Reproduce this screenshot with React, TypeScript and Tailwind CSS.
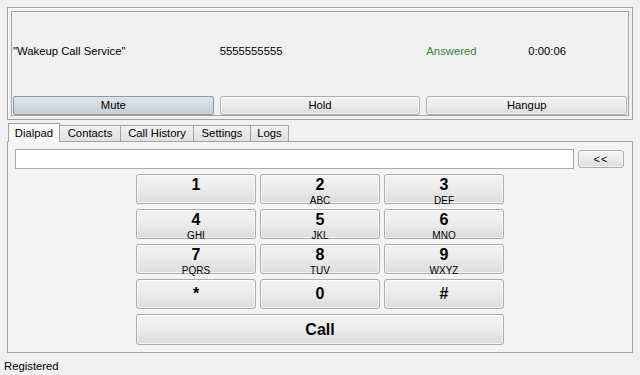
import React from 'react';

const keys = [
  { d: '1', l: '\u00a0' },
  { d: '2', l: 'ABC' },
  { d: '3', l: 'DEF' },
  { d: '4', l: 'GHI' },
  { d: '5', l: 'JKL' },
  { d: '6', l: 'MNO' },
  { d: '7', l: 'PQRS' },
  { d: '8', l: 'TUV' },
  { d: '9', l: 'WXYZ' },
];

const btn =
  'border border-[#acacac] rounded-[3px] bg-gradient-to-b from-[#f3f3f3] via-[#ebebeb] to-[#dcdcdc] shadow-[inset_0_0_0_1px_rgba(255,255,255,0.7)]';

const tabs = [
  { label: 'Dialpad', w: 'w-[52px]' },
  { label: 'Contacts', w: 'w-[62px]' },
  { label: 'Call History', w: 'w-[74px]' },
  { label: 'Settings', w: 'w-[58px]' },
  { label: 'Logs', w: 'w-[39px]' },
];

export default function App() {
  return (
    <div className="w-[640px] h-[375px] bg-[#f0f0f0] font-['Liberation_Sans',Arial,sans-serif] text-[11.3px] text-black flex flex-col overflow-hidden">
      {/* active call panel */}
      <div className="mx-[7px] mt-[7px] h-[113px] border border-[#a3a3a3] p-[3px] shadow-[inset_1px_1px_0_#fff]">
        <div className="h-full border border-[#a3a3a3] flex flex-col px-[1px]">
          <div className="h-[78px] grid grid-cols-3 gap-[6px] items-center">
            <span>"Wakeup Call Service"</span>
            <span>5555555555</span>
            <div className="flex">
              <span className="w-[102px] text-[#3b873b]">Answered</span>
              <span>0:00:06</span>
            </div>
          </div>
          <div className="h-[19px] grid grid-cols-3 gap-[6px] mt-[6px]">
            <button className="border border-[#8c9aa8] rounded-[2px] bg-gradient-to-b from-[#e0e5ea] to-[#c8cfd7] leading-none">
              Mute
            </button>
            <button className={`${btn} leading-none`}>Hold</button>
            <button className={`${btn} leading-none`}>Hangup</button>
          </div>
        </div>
      </div>

      {/* tabs */}
      <div className="mt-[3px] h-[18px] flex items-end pl-[8px] relative z-10">
        {tabs.map((t, i) =>
          i === 0 ? (
            <div
              key={t.label}
              className={`${t.w} h-[19px] -mb-px border border-b-0 border-[#a3a3a3] bg-[#f9f9f9] flex items-center justify-center`}
            >
              {t.label}
            </div>
          ) : (
            <div
              key={t.label}
              className={`${t.w} h-[16px] -ml-px border border-b-0 border-[#a3a3a3] bg-gradient-to-b from-[#f2f2f2] to-[#e0e0e0] flex items-center justify-center`}
            >
              {t.label}
            </div>
          )
        )}
      </div>

      {/* dialpad pane */}
      <div className="mx-[7px] h-[212px] border border-[#a3a3a3] bg-[#f4f4f4] px-[7px] pt-[7px]">
        <div className="flex items-start gap-[4px]">
          <input
            type="text"
            className="w-[559px] h-[20px] border border-[#a9a9a9] bg-white outline-none px-1"
          />
          <button className={`${btn} w-[46px] h-[18px] mt-[1px] leading-none text-[11px] tracking-[1px]`}>
            &lt;&lt;
          </button>
        </div>

        <div className="mt-[5px] ml-[121px] w-[368px] grid grid-cols-3 gap-x-[4px] gap-y-[5px]">
          {keys.map((k) => (
            <button key={k.d} className={`${btn} h-[30px] flex flex-col items-center pt-[2px]`}>
              <span className="font-bold text-[16px] leading-[16px]">{k.d}</span>
              <span className="text-[10px] leading-[10px] mt-[3px]">{k.l}</span>
            </button>
          ))}
          {['*', '0', '#'].map((d) => (
            <button key={d} className={`${btn} h-[30px] flex items-center justify-center font-bold text-[16px] leading-none`}>
              {d}
            </button>
          ))}
          <button className={`${btn} col-span-3 h-[31px] flex items-center justify-center font-bold text-[16px] leading-none`}>
            Call
          </button>
        </div>
      </div>

      <div className="mt-[6px] px-[4px] leading-[14px]">Registered</div>
    </div>
  );
}
